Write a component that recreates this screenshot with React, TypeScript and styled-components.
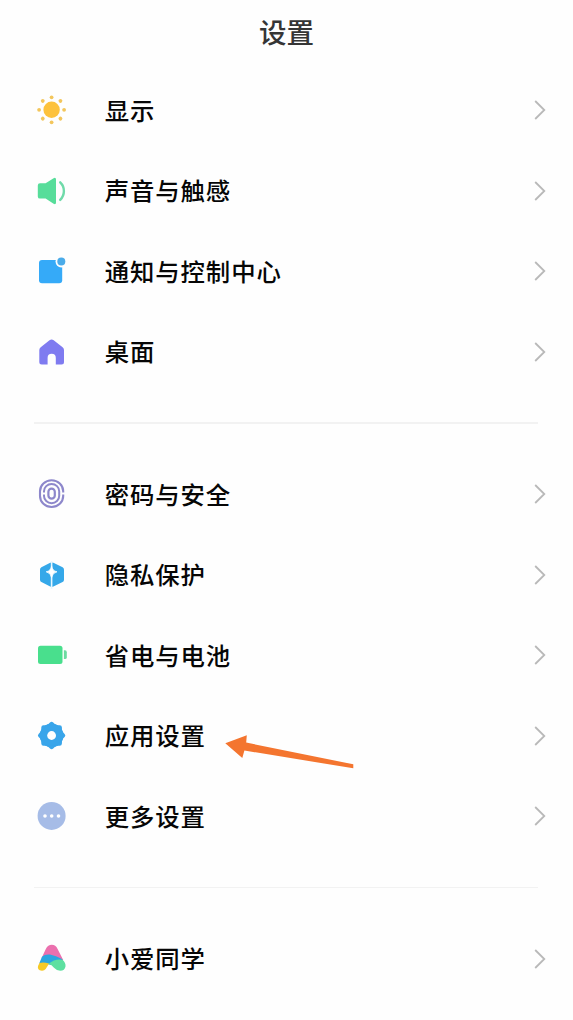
import React from "react";
import styled, { createGlobalStyle } from "styled-components";

const GlobalStyle = createGlobalStyle`
  * { box-sizing: border-box; }
  body {
    margin: 0;
    background: #fefefe;
    font-family: "Noto Sans CJK SC", "Noto Sans", sans-serif;
    overflow: hidden;
  }
`;

const Screen = styled.main`
  width: 573px;
  height: 1020px;
  display: flex;
  flex-direction: column;
  background: #fefefe;
  overflow: hidden;
`;

const Header = styled.header`
  height: 69.75px;
  flex: none;
  display: flex;
  justify-content: center;
  padding-top: 11px;
`;

const Title = styled.h1`
  margin: 0;
  font-size: 27.5px;
  line-height: 40px;
  font-weight: 500;
  color: #353535;
`;

const Group = styled.ul`
  margin: 0;
  padding: 0;
  list-style: none;
  flex: none;
`;

const Row = styled.li`
  position: relative;
  height: 80.5px;
  display: flex;
  align-items: center;
  padding: 0 26px 0 32px;
`;

const IconBox = styled.svg`
  width: 40px;
  height: 40px;
  flex: none;
`;

const Label = styled.span`
  flex: 1;
  margin-left: 32.7px;
  padding-bottom: 0.5px;
  font-size: 24.4px;
  line-height: 36px;
  letter-spacing: 0.9px;
  font-weight: 500;
  color: #060606;
  white-space: nowrap;
`;

const Chevron = styled.svg`
  width: 14px;
  height: 22px;
  flex: none;
`;

const Divider = styled.div`
  height: 62px;
  flex: none;
  display: flex;
  align-items: center;
  padding: 0 35px 0 34px;

  &::after {
    content: "";
    flex: 1;
    height: 1.5px;
    background: #f2f2f2;
  }
`;

const Pointer = styled.svg`
  position: absolute;
  left: 220px;
  top: 35px;
  width: 140px;
  height: 42px;
`;

const DisplayIcon = () => (
  <g fill="#fdc23c">
    <circle cx="19.6" cy="19.8" r="8.2" />
    {[0, 45, 90, 135, 180, 225, 270, 315].map((a) => (
      <circle key={a} cx="19.6" cy="7.3" r="1.9" transform={`rotate(${a} 19.6 19.8)`} fill="#f3c65c" />
    ))}
  </g>
);

const SoundIcon = () => (
  <>
    <path d="M8 12.2H13.6L21.6 7.2Q24 6 24 8.5V31.5Q24 34 21.6 32.8L13.6 27.6H8Q5.8 27.6 5.8 25.4V14.4Q5.8 12.2 8 12.2Z" fill="#57dd9a" />
    <path d="M28.2 11.3Q31.9 14.8 31.9 20T28.2 28.9" fill="none" stroke="#6fdaa9" strokeWidth="2.4" strokeLinecap="round" />
  </>
);

const NotificationIcon = () => (
  <>
    <rect x="7" y="9" width="23.2" height="23.3" rx="3" fill="#35aaf8" />
    <circle cx="29.3" cy="10.6" r="5.8" fill="#fefefe" />
    <circle cx="29.3" cy="10.6" r="4" fill="#4aabe9" />
  </>
);

const HomeIcon = () => (
  <path d="M17.5 8.3Q19.6 6.8 21.7 8.3L30.6 15.2Q32 16.3 32 18V30Q32 32.5 29.5 32.5H23.8V26Q23.8 21.8 19.7 21.8T15.6 26V32.5H9.8Q7.3 32.5 7.3 30V18Q7.3 16.3 8.7 15.2Z" fill="#7f7bf0" />
);

const FingerprintIcon = () => (
  <g fill="none" stroke="#8d87cb">
    <rect x="16.4" y="14.6" width="6.4" height="10" rx="3.2" strokeWidth="2.2" />
    <path d="M12 18.4V17.2A7.6 7.2 0 0 1 27.2 17.2V22A7.6 7.2 0 0 1 12 22V20.6" strokeWidth="2" />
    <path d="M31.2 18.4V17.2A11.6 11 0 0 0 8 17.2V22A11.6 11 0 0 0 31.2 22V20.6" strokeWidth="2.1" />
  </g>
);

const PrivacyIcon = () => (
  <>
    <path d="M18.2 7.8Q19.8 7 21.4 7.8L30.6 12.2Q32 13 32 14.7V24.7Q32 26.3 30.6 27.1L21.4 31.5Q19.8 32.3 18.2 31.5L9.4 27.1Q8 26.3 8 24.7V14.7Q8 13 9.4 12.2Z" fill="#35a8e9" />
    <path d="M19.6 6V34" stroke="#e6f7ff" strokeWidth="1.6" />
    <path d="M19.6 11Q20.4 16 25 16.8Q20.4 17.8 19.6 22.6Q18.8 17.8 14.2 16.8Q18.8 16 19.6 11Z" fill="#fff" stroke="#fff" strokeWidth=".8" />
  </>
);

const BatteryIcon = () => (
  <>
    <rect x="6" y="10.7" width="24.5" height="18.4" rx="2.5" fill="#49df8d" />
    <path d="M31.9 15.3H33Q34.8 15.3 34.8 17.2V22.2Q34.8 24.1 33 24.1H31.9Z" fill="#6bdba0" />
  </>
);

const AppsIcon = () => (
  <>
    <g fill="#39a5ea">
      <circle cx="19.6" cy="19.5" r="11.8" />
      {[0, 45, 90, 135, 180, 225, 270, 315].map((a) => (
        <path key={a} d="M14.4 9.2Q16.6 8.3 18 6.5Q19.6 5 21.2 6.5Q22.6 8.3 24.8 9.2Z" transform={`rotate(${a} 19.6 19.5)`} />
      ))}
    </g>
    <circle cx="19.6" cy="19.5" r="4.4" fill="#fefefe" />
  </>
);

const MoreIcon = () => (
  <>
    <circle cx="19.6" cy="19.9" r="14" fill="#a6bce7" />
    <g fill="#fff">
      <circle cx="13" cy="20" r="1.8" />
      <circle cx="19.7" cy="20" r="1.8" />
      <circle cx="26.5" cy="20" r="1.8" />
    </g>
  </>
);

const AssistantIcon = () => (
  <>
    <path d="M13.8 10Q16 5.8 19.8 5.8T25.6 10L31.2 21L20 21L9.5 19.3Z" fill="#eb70ae" />
    <path d="M10 17.8Q13 15 18 15.6Q24 16.8 30 20L31 22L24 27L17 25.5Q12 23.6 7.2 24.6Z" fill="#2ca6df" />
    <path d="M7.5 24Q11.5 22.8 17.1 24.6L13.7 30Q12.2 32 9.8 31.8Q4.9 31.2 6.1 26.8Z" fill="#f6ca27" />
    <path d="M16.6 24.8Q23 19.6 30.4 20.8Q34 23.8 33.5 27.5Q32.8 31.7 28.2 31.8Q24.8 31.8 22 28.8Q19.8 26 16.6 24.8Z" fill="#5de0a0" />
  </>
);

interface Item {
  label: string;
  Icon: React.FC;
  highlighted?: boolean;
}

const groups: Item[][] = [
  [
    { label: "显示", Icon: DisplayIcon },
    { label: "声音与触感", Icon: SoundIcon },
    { label: "通知与控制中心", Icon: NotificationIcon },
    { label: "桌面", Icon: HomeIcon },
  ],
  [
    { label: "密码与安全", Icon: FingerprintIcon },
    { label: "隐私保护", Icon: PrivacyIcon },
    { label: "省电与电池", Icon: BatteryIcon },
    { label: "应用设置", Icon: AppsIcon, highlighted: true },
    { label: "更多设置", Icon: MoreIcon },
  ],
  [{ label: "小爱同学", Icon: AssistantIcon }],
];

export default function App() {
  return (
    <>
      <GlobalStyle />
      <Screen>
        <Header>
          <Title>设置</Title>
        </Header>
        {groups.map((items, i) => (
          <React.Fragment key={i}>
            {i > 0 && <Divider />}
            <Group>
              {items.map(({ label, Icon, highlighted }) => (
                <Row key={label}>
                  <IconBox viewBox="0 0 40 40">
                    <Icon />
                  </IconBox>
                  <Label>{label}</Label>
                  <Chevron viewBox="0 0 14 22">
                    <path d="M2.2 2L11.3 11L2.2 20" fill="none" stroke="#b9b9b9" strokeWidth="1.8" />
                  </Chevron>
                  {highlighted && (
                    <Pointer viewBox="0 0 140 42">
                      <path d="M5.3 13.2L26.8 5.2L26.2 12.6L133.3 34.3V38.3L24.4 20.5L22.3 28Z" fill="#f4752f" />
                    </Pointer>
                  )}
                </Row>
              ))}
            </Group>
          </React.Fragment>
        ))}
      </Screen>
    </>
  );
}
